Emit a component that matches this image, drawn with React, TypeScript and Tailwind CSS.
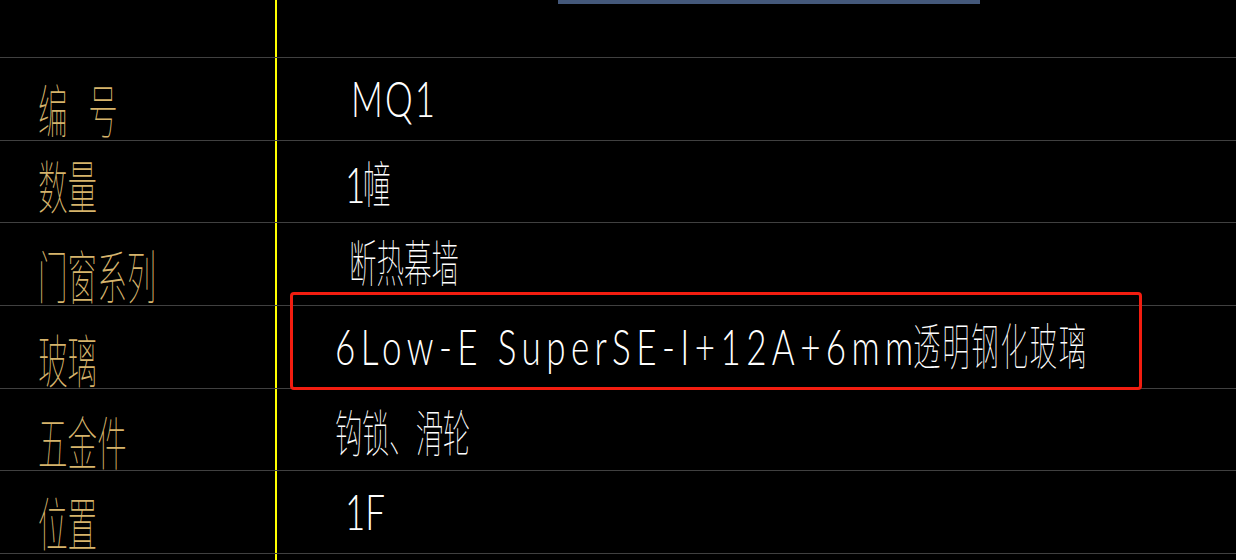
import type { ReactNode } from 'react'

const lato = "font-['Lato',sans-serif]"
const cjk = "font-['Noto_Sans_CJK_SC','Noto_Sans_CJK_TC',sans-serif]"

// Latin text in the CAD font is narrow: squeeze it inside a fixed slot
function Latin({ children, slot, tracking }: { children: ReactNode; slot: string; tracking: string }) {
  return (
    <span className={`inline-block shrink-0 ${slot}`}>
      <span
        className={`${lato} ${tracking} inline-block origin-left scale-x-[0.7] whitespace-nowrap text-[50px] leading-none font-light text-white`}
      >
        {children}
      </span>
    </span>
  )
}

function Cjk({ children, tracking = '' }: { children: ReactNode; tracking?: string }) {
  return (
    <span
      className={`${cjk} ${tracking} inline-block origin-left scale-x-[0.55] whitespace-nowrap text-[50px] leading-none font-thin text-white`}
    >
      {children}
    </span>
  )
}

type Row = {
  label: string
  h: string
  labelPt: string
  valuePt: string
  valuePl: string
  value: ReactNode
  boxed?: boolean
}

const rows: Row[] = [
  {
    label: '编 号',
    h: 'h-[83px]',
    labelPt: 'pt-[21px]',
    valuePt: 'pt-[15px]',
    valuePl: 'pl-[74px]',
    value: <Latin slot="w-[80px]" tracking="tracking-[3px]">MQ1</Latin>,
  },
  {
    label: '数量',
    h: 'h-[82px]',
    labelPt: 'pt-[14px]',
    valuePt: 'pt-[15px]',
    valuePl: 'pl-[68px]',
    value: (
      <>
        <Latin slot="w-[18px]" tracking="">1</Latin>
        <Cjk>幢</Cjk>
      </>
    ),
  },
  {
    label: '门窗系列',
    h: 'h-[83px]',
    labelPt: 'pt-[22px]',
    valuePt: 'pt-[12px]',
    valuePl: 'pl-[72px]',
    value: <Cjk>断热幕墙</Cjk>,
  },
  {
    label: '玻璃',
    h: 'h-[83px]',
    labelPt: 'pt-[23px]',
    valuePt: 'pt-[12px]',
    valuePl: 'pl-[58px]',
    value: (
      <>
        <Latin slot="w-[578px]" tracking="tracking-[7.7px]">6Low-E SuperSE-I+12A+6mm</Latin>
        <Cjk tracking="tracking-[3px]">透明钢化玻璃</Cjk>
      </>
    ),
    boxed: true,
  },
  {
    label: '五金件',
    h: 'h-[82px]',
    labelPt: 'pt-[22px]',
    valuePt: 'pt-[16px]',
    valuePl: 'pl-[58px]',
    value: <Cjk tracking="tracking-[-1px]">钩锁、滑轮</Cjk>,
  },
  {
    label: '位置',
    h: 'h-[83px]',
    labelPt: 'pt-[21px]',
    valuePt: 'pt-[15px]',
    valuePl: 'pl-[68px]',
    value: <Latin slot="w-[60px]" tracking="tracking-[0px]">1F</Latin>,
  },
]

export default function App() {
  return (
    <div className="h-[560px] w-[1236px] overflow-hidden bg-black flex flex-col">
      {/* header strip */}
      <div className="h-[58px] shrink-0 flex border-b border-[#404040]">
        <div className="w-[277px] shrink-0 border-r-2 border-[#ffff00]" />
        <div className="flex-1">
          <div className="ml-[281px] w-[422px] h-1 bg-[#44587a]" />
        </div>
      </div>

      {rows.map((row) => (
        <div key={row.label} className={`${row.h} shrink-0 flex border-b border-[#404040] relative`}>
          <div className={`w-[277px] shrink-0 border-r-2 border-[#ffff00] flex items-start pl-[38px] ${row.labelPt}`}>
            <span
              className={`${cjk} inline-block origin-left scale-x-[0.51] whitespace-nowrap text-[58px] leading-none font-thin text-[#d6b46c] [word-spacing:28px]`}
            >
              {row.label}
            </span>
          </div>
          <div className={`flex-1 flex items-start ${row.valuePl} ${row.valuePt}`}>
            <div className="flex items-baseline">{row.value}</div>
          </div>
          {row.boxed && (
            <div className="absolute left-[290px] top-[-14px] w-[852px] h-[98px] border-[3px] border-[#f21d10] rounded-[4px]" />
          )}
        </div>
      ))}

      <div className="flex-1 flex">
        <div className="w-[277px] shrink-0 border-r-2 border-[#ffff00]" />
      </div>
    </div>
  )
}
